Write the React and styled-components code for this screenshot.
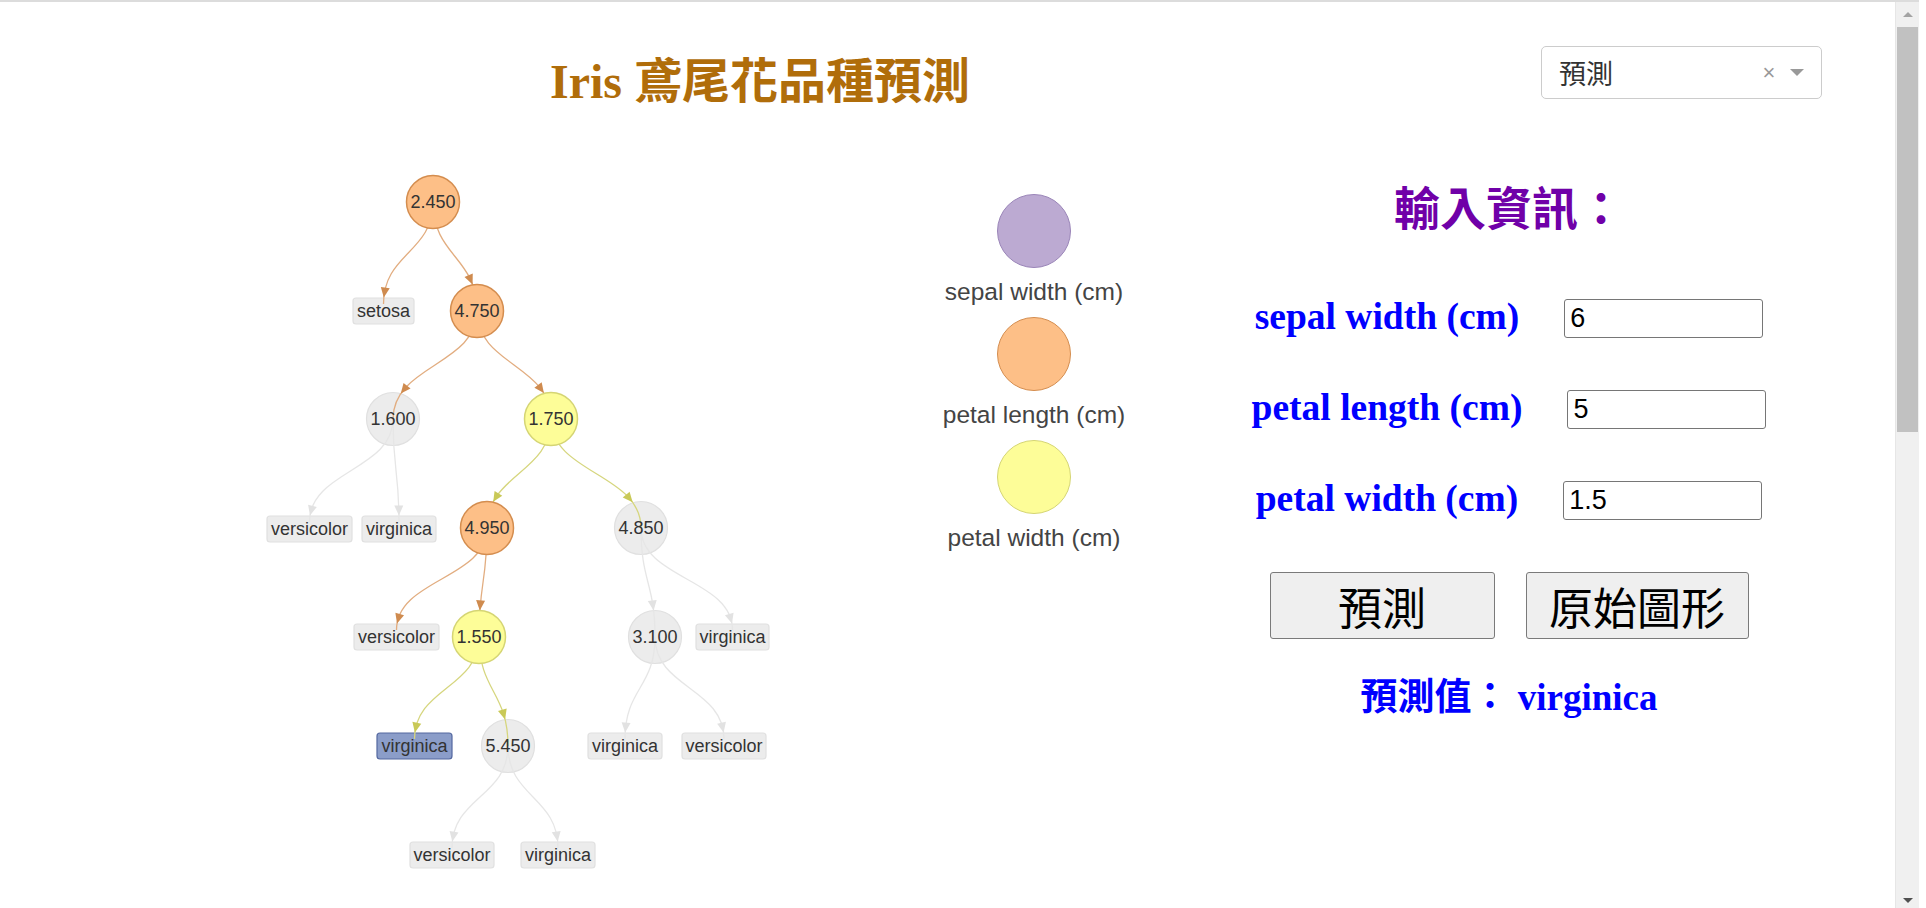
import React from 'react'
import styled, { createGlobalStyle } from 'styled-components'

const GlobalStyle = createGlobalStyle`
  html, body {
    margin: 0;
    padding: 0;
    background: #fff;
    overflow: hidden;
  }
  body {
    font-family: "Liberation Sans", Arial, sans-serif;
  }
`

// colours used by the tree and the legend
const palette = {
  orange: { fill: '#fdbf87', stroke: '#d48d4f', edge: '#e2ad80', arrow: '#cf8b4f' },
  yellow: { fill: '#fdfd98', stroke: '#d5d574', edge: '#d6d67e', arrow: '#c9c957' },
  gray: { fill: '#ececec', stroke: '#e0e0e0', edge: '#e6e6e6', arrow: '#e2e2e2' },
  purple: { fill: '#bcaad2', stroke: '#9a85b8' },
}

const R = 26.5
const RECT_H = 26

const nodes = {
  n0: { x: 433, y: 202, label: '2.450', kind: 'orange' },
  l0: { x: 383.5, y: 311, label: 'setosa', w: 61 },
  n1: { x: 477, y: 311, label: '4.750', kind: 'orange' },
  n2: { x: 393, y: 419, label: '1.600', kind: 'gray' },
  n3: { x: 551, y: 419, label: '1.750', kind: 'yellow' },
  l1: { x: 309.5, y: 529, label: 'versicolor', w: 85 },
  l2: { x: 399, y: 529, label: 'virginica', w: 74 },
  n4: { x: 487, y: 528, label: '4.950', kind: 'orange' },
  n5: { x: 641, y: 528, label: '4.850', kind: 'gray' },
  l3: { x: 396.5, y: 637, label: 'versicolor', w: 85 },
  n6: { x: 479, y: 637, label: '1.550', kind: 'yellow' },
  n7: { x: 655, y: 637, label: '3.100', kind: 'gray' },
  l4: { x: 732.5, y: 637, label: 'virginica', w: 73 },
  l5: { x: 414.5, y: 746, label: 'virginica', w: 75, active: true },
  n8: { x: 508, y: 746, label: '5.450', kind: 'gray' },
  l6: { x: 625, y: 746, label: 'virginica', w: 74 },
  l7: { x: 724, y: 746, label: 'versicolor', w: 84 },
  l8: { x: 452, y: 855, label: 'versicolor', w: 84 },
  l9: { x: 558, y: 855, label: 'virginica', w: 74 },
}

const edges = [
  ['n0', 'l0'], ['n0', 'n1'],
  ['n1', 'n2'], ['n1', 'n3'],
  ['n2', 'l1'], ['n2', 'l2'],
  ['n3', 'n4'], ['n3', 'n5'],
  ['n4', 'l3'], ['n4', 'n6'],
  ['n5', 'n7'], ['n5', 'l4'],
  ['n6', 'l5'], ['n6', 'n8'],
  ['n7', 'l6'], ['n7', 'l7'],
  ['n8', 'l8'], ['n8', 'l9'],
]

const bez = (a, b, c, d, t) => {
  const u = 1 - t
  return u * u * u * a + 3 * u * u * t * b + 3 * u * t * t * c + t * t * t * d
}

const inside = (n, x, y) => {
  if (n.kind) return Math.hypot(x - n.x, y - n.y) < R
  return Math.abs(x - n.x) <= n.w / 2 && Math.abs(y - n.y) <= RECT_H / 2
}

function buildEdge(fromId, toId) {
  const p = nodes[fromId]
  const c = nodes[toId]
  const ex = c.x
  const ey = c.kind ? c.y : c.y - RECT_H / 2 + 6
  const my = (p.y + ey) / 2
  const d = `M${p.x},${p.y} C${p.x},${my} ${ex},${my} ${ex},${ey}`
  let t = 1
  while (t > 0 && inside(c, bez(p.x, p.x, ex, ex, t), bez(p.y, my, my, ey, t))) t -= 0.004
  const tip = { x: bez(p.x, p.x, ex, ex, t), y: bez(p.y, my, my, ey, t) }
  const back = { x: bez(p.x, p.x, ex, ex, t - 0.06), y: bez(p.y, my, my, ey, t - 0.06) }
  const len = Math.hypot(tip.x - back.x, tip.y - back.y) || 1
  const ux = (tip.x - back.x) / len
  const uy = (tip.y - back.y) / len
  const bx = tip.x - ux * 10
  const by = tip.y - uy * 10
  const arrow = `${tip.x},${tip.y} ${bx - uy * 4.5},${by + ux * 4.5} ${bx + uy * 4.5},${by - ux * 4.5}`
  return { d, arrow, colors: palette[p.kind] }
}

const DecisionTree = () => {
  const list = Object.entries(nodes)
  const built = edges.map(([a, b]) => ({ key: a + b, ...buildEdge(a, b) }))
  return (
    <TreeSvg width="900" height="790" viewBox="0 110 900 790">
      {list.filter(([, n]) => !n.kind).map(([id, n]) => (
        <rect
          key={id}
          x={n.x - n.w / 2}
          y={n.y - RECT_H / 2}
          width={n.w}
          height={RECT_H}
          rx="3"
          fill={n.active ? '#8b9dc9' : '#ececec'}
          stroke={n.active ? '#5468a0' : '#e0e0e0'}
          strokeWidth="1.2"
        />
      ))}
      {list.filter(([, n]) => n.kind === 'gray').map(([id, n]) => (
        <circle key={id} cx={n.x} cy={n.y} r={R} fill={palette.gray.fill} stroke={palette.gray.stroke} strokeWidth="1.2" />
      ))}
      {built.map(e => (
        <g key={e.key}>
          <path d={e.d} fill="none" stroke={e.colors.edge} strokeWidth="1.3" />
          <polygon points={e.arrow} fill={e.colors.arrow} />
        </g>
      ))}
      {list.filter(([, n]) => n.kind && n.kind !== 'gray').map(([id, n]) => (
        <circle key={id} cx={n.x} cy={n.y} r={R} fill={palette[n.kind].fill} stroke={palette[n.kind].stroke} strokeWidth="1.5" />
      ))}
      {list.map(([id, n]) => (
        <NodeText key={id} x={n.x} y={n.y} dy="0.35em" textAnchor="middle">{n.label}</NodeText>
      ))}
    </TreeSvg>
  )
}

const legend = [
  { kind: 'purple', label: 'sepal width (cm)' },
  { kind: 'orange', label: 'petal length (cm)' },
  { kind: 'yellow', label: 'petal width (cm)' },
]

const fields = [
  { label: 'sepal width (cm)', value: '6' },
  { label: 'petal length (cm)', value: '5' },
  { label: 'petal width (cm)', value: '1.5' },
]

const App = () => {
  return (
    <>
      <GlobalStyle />
      <Frame>
        <Page>
          <Header>
            <Title>Iris 鳶尾花品種預測</Title>
            <Select>
              <SelectValue>預測</SelectValue>
              <ClearMark>×</ClearMark>
              <CaretZone><Caret /></CaretZone>
            </Select>
          </Header>
          <Main>
            <TreePanel>
              <DecisionTree />
            </TreePanel>
            <LegendPanel>
              {legend.map(item => (
                <LegendItem key={item.label}>
                  <Dot $fill={palette[item.kind].fill} $stroke={palette[item.kind].stroke} />
                  <Caption>{item.label}</Caption>
                </LegendItem>
              ))}
            </LegendPanel>
            <FormPanel>
              <FormTitle>輸入資訊：</FormTitle>
              <Fields>
                {fields.map(f => (
                  <FieldRow key={f.label}>
                    <FieldLabel>{f.label}</FieldLabel>
                    <Input defaultValue={f.value} />
                  </FieldRow>
                ))}
              </Fields>
              <ButtonRow>
                <Button $w={225}>預測</Button>
                <Button $w={223}>原始圖形</Button>
              </ButtonRow>
              <Result>預測值： virginica</Result>
            </FormPanel>
          </Main>
        </Page>
        <ScrollRail>
          <ScrollBtn><ArrowUp /></ScrollBtn>
          <Thumb />
          <Track />
          <ScrollBtn><ArrowDown /></ScrollBtn>
        </ScrollRail>
      </Frame>
    </>
  )
}

const Frame = styled.div`
  display: flex;
  width: 1919px;
  height: 908px;
  box-sizing: border-box;
  border-top: 2px solid #dcdcdc;
`

const Page = styled.div`
  flex: 1;
  min-width: 0;
`

const Header = styled.header`
  display: flex;
  align-items: flex-start;
  height: 108px;
  padding-top: 44px;
  box-sizing: border-box;
`

const Title = styled.h1`
  flex: 0 0 1520px;
  margin: 8px 0 0;
  text-align: center;
  font-family: "Liberation Serif", "Noto Sans CJK TC", serif;
  font-size: 48px;
  line-height: 56px;
  font-weight: 700;
  color: #b06d0a;
`

const Select = styled.div`
  display: flex;
  align-items: center;
  flex-shrink: 0;
  margin-left: 21px;
  width: 281px;
  height: 53px;
  box-sizing: border-box;
  padding-left: 17px;
  border: 1px solid #cccccc;
  border-radius: 5px;
  background: #fff;
`

const SelectValue = styled.span`
  flex: 1;
  font-family: "Noto Sans CJK TC", sans-serif;
  font-size: 27px;
  color: #333;
`

const ClearMark = styled.span`
  width: 18px;
  text-align: center;
  font-family: "Liberation Sans", Arial, sans-serif;
  font-size: 22px;
  line-height: 1;
  color: #999;
`

const CaretZone = styled.span`
  display: flex;
  justify-content: center;
  width: 38px;
  padding-right: 5px;
`

const Caret = styled.span`
  width: 0;
  height: 0;
  border-left: 7px solid transparent;
  border-right: 7px solid transparent;
  border-top: 7px solid #999;
`

const Main = styled.main`
  display: flex;
  align-items: flex-start;
`

const TreePanel = styled.section`
  flex: 0 0 900px;
`

const TreeSvg = styled.svg`
  display: block;
`

const NodeText = styled.text`
  font-family: "Liberation Sans", Arial, sans-serif;
  font-size: 18px;
  fill: #333;
`

const LegendPanel = styled.section`
  flex: 0 0 268px;
  display: flex;
  flex-direction: column;
  align-items: center;
  gap: 11px;
  padding-top: 84px;
`

const LegendItem = styled.div`
  display: flex;
  flex-direction: column;
  align-items: center;
`

const Dot = styled.div`
  width: 74px;
  height: 74px;
  box-sizing: border-box;
  border-radius: 50%;
  background: ${p => p.$fill};
  border: 1.5px solid ${p => p.$stroke};
`

const Caption = styled.div`
  margin-top: 10px;
  font-size: 24.5px;
  line-height: 28px;
  color: #444;
  white-space: nowrap;
`

const FormPanel = styled.section`
  flex: 0 0 682px;
  display: flex;
  flex-direction: column;
  align-items: center;
  text-align: center;
`

const FormTitle = styled.h2`
  margin: 75px 0 0;
  font-family: "Liberation Serif", "Noto Sans CJK TC", serif;
  font-size: 46px;
  line-height: 50px;
  font-weight: 700;
  color: #7000a8;
`

const Fields = styled.div`
  display: flex;
  flex-direction: column;
  gap: 52px;
  margin-top: 64px;
`

const FieldRow = styled.div`
  display: flex;
  justify-content: center;
  align-items: center;
  gap: 45px;
  height: 39px;
`

const FieldLabel = styled.label`
  margin-bottom: 5px;
  font-family: "Liberation Serif", "Times New Roman", serif;
  font-size: 37.5px;
  font-weight: 700;
  line-height: 39px;
  color: #0000ff;
  white-space: nowrap;
`

const Input = styled.input`
  width: 199px;
  height: 39px;
  box-sizing: border-box;
  padding: 0 5px;
  border: 1px solid #767676;
  border-radius: 3px;
  font-family: "Liberation Sans", Arial, sans-serif;
  font-size: 27px;
  color: #000;
  outline: none;
`

const ButtonRow = styled.div`
  display: flex;
  gap: 31px;
  margin-top: 52px;
`

const Button = styled.button`
  width: ${p => p.$w}px;
  height: 67px;
  padding: 0;
  border: 1px solid #7a7a7a;
  border-radius: 3px;
  background: #efefef;
  font-family: "Noto Sans CJK TC", sans-serif;
  font-size: 44px;
  font-weight: 400;
  color: #000;
`

const Result = styled.div`
  margin-top: 37px;
  font-family: "Liberation Serif", "Noto Sans CJK TC", serif;
  font-size: 37px;
  line-height: 44px;
  font-weight: 700;
  color: #0000ff;
`

const ScrollRail = styled.aside`
  flex: 0 0 24px;
  display: flex;
  flex-direction: column;
  box-sizing: border-box;
  background: #f0f0f0;
  border-left: 1px solid #e6e6e6;
`

const ScrollBtn = styled.div`
  height: 25px;
  display: flex;
  align-items: center;
  justify-content: center;
`

const ArrowUp = styled.span`
  width: 0;
  height: 0;
  border-left: 5px solid transparent;
  border-right: 5px solid transparent;
  border-bottom: 5px solid #a3a3a3;
`

const ArrowDown = styled.span`
  width: 0;
  height: 0;
  margin-top: 10px;
  border-left: 5px solid transparent;
  border-right: 5px solid transparent;
  border-top: 5px solid #505050;
`

const Thumb = styled.div`
  height: 405px;
  margin: 0 1px;
  background: #c1c1c1;
`

const Track = styled.div`
  flex: 1;
`

export default App
